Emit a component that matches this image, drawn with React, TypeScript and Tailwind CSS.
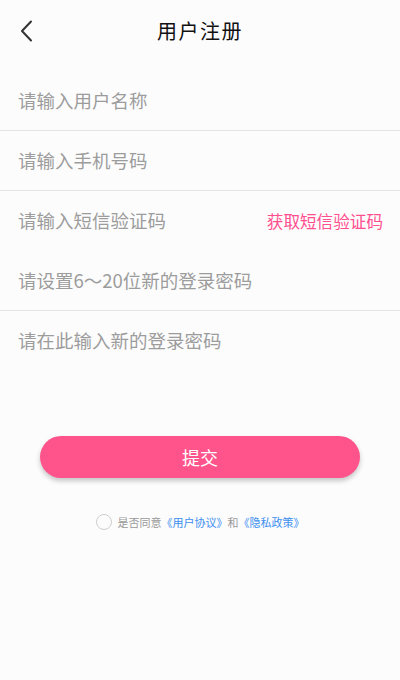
import { useState } from "react";

const cjk = { fontFamily: '"Noto Sans CJK SC", "Noto Sans", sans-serif' };

type Field = { ph: string; border: boolean; sms?: boolean };

const fields: Field[] = [
    { ph: "请输入用户名称", border: true },
    { ph: "请输入手机号码", border: true },
    { ph: "请输入短信验证码", border: false, sms: true },
    { ph: "请设置6～20位新的登录密码", border: true },
    { ph: "请在此输入新的登录密码", border: false },
];

export default function App() {
    const [agree, setAgree] = useState(false);

    return (
        <div className="w-[400px] h-[680px] bg-[#fdfcfd] text-[#222]" style={cjk}>
            {/* 头部 */}
            <div className="relative h-[71px] flex items-start justify-center pt-[17px]">
                <button className="absolute left-[14px] top-[17px] w-[24px] h-[28px] flex items-center justify-center">
                    <svg width="14" height="22" viewBox="0 0 14 22" fill="none">
                        <path d="M12 1.5 L3 11 L12 20.5" stroke="#333" strokeWidth="2" strokeLinecap="round" strokeLinejoin="round" />
                    </svg>
                </button>
                <h1 className="text-[20px] leading-[28px] text-[#111] tracking-[1.5px]">用户注册</h1>
            </div>

            {/* 表单 */}
            <div>
                {fields.map(f => (
                    <div
                        key={f.ph}
                        className={`h-[60px] flex items-center justify-between pl-[18px] pr-[17px] ${
                            f.border ? "border-b border-[#e4e4e4]" : ""
                        }`}
                    >
                        <input
                            className="flex-1 min-w-0 bg-transparent outline-none text-[18.5px] placeholder:text-[#9c9c9c]"
                            placeholder={f.ph}
                            style={cjk}
                        />
                        {f.sms && (
                            <span className="text-[16.6px] text-[#ff4f8f] whitespace-nowrap">获取短信验证码</span>
                        )}
                    </div>
                ))}
            </div>

            {/* 提交 */}
            <div className="px-[40px] mt-[65px]">
                <button className="w-full h-[42px] rounded-full bg-[#ff548b] text-white text-[18px] shadow-[0_3px_5px_rgba(0,0,0,0.22)]">
                    提交
                </button>
            </div>

            {/* 协议 */}
            <div className="mt-[36px] flex items-center justify-center text-[11px]">
                <button
                    onClick={() => setAgree(!agree)}
                    className={`w-[16px] h-[16px] rounded-full border mr-[6px] ${
                        agree ? "border-[#ff548b] bg-[#ff548b]" : "border-[#cfcfcf]"
                    }`}
                />
                <span className="text-[#999]">是否同意</span>
                <span className="text-[#3b8ff0]">《用户协议》</span>
                <span className="text-[#999]">和</span>
                <span className="text-[#3b8ff0]">《隐私政策》</span>
            </div>
        </div>
    );
}
